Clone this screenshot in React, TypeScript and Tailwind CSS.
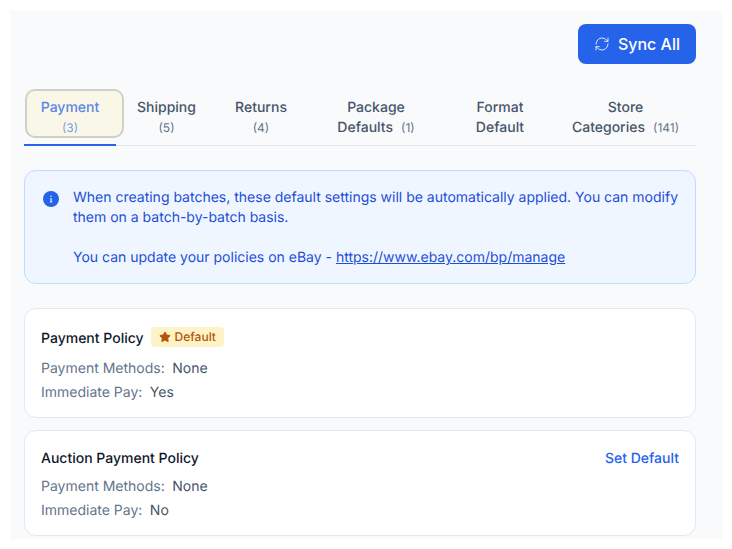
import React from 'react';
import { RefreshCw, Star } from 'lucide-react';

const tabs = [
  { key: 'shipping', width: 'w-[101px]', lines: ['Shipping'], count: '(5)' },
  { key: 'returns', width: 'w-[88px]', lines: ['Returns'], count: '(4)' },
  { key: 'package', width: 'w-[142px]', lines: ['Package', 'Defaults'], count: '(1)' },
  { key: 'format', width: 'w-[106px]', lines: ['Format', 'Default'], count: '' },
  { key: 'store', width: 'w-[145px]', lines: ['Store', 'Categories'], count: '(141)' },
];

const PolicyRow = ({ label, value }: { label: string; value: string }) => (
  <div className="text-sm leading-6">
    <span className="text-[#64748b]">{label}:</span>
    <span className="ml-[7.5px] text-[#475569]">{value}</span>
  </div>
);

const App = () => {
  return (
    <div className="h-[549px] overflow-hidden bg-white p-[10px] font-['Inter',sans-serif] antialiased [text-rendering:geometricPrecision]">
      <div className="h-[529px] overflow-hidden bg-[#f8fafc] pl-[14px] pr-[26px] pt-[14px]">
        {/* Header */}
        <div className="flex justify-end">
          <button className="flex h-10 w-[118px] items-center justify-center gap-2 rounded-lg bg-[#2563eb] text-base font-medium text-white">
            <RefreshCw className="h-4 w-4" strokeWidth={1.25} />
            Sync All
          </button>
        </div>

        {/* Tabs */}
        <div className="relative mt-6 flex h-[58px] border-b border-[#e2e8f0]">
          <div className="absolute left-[1px] top-[1px] h-[49px] w-[99px] rounded-[10px] border-[2px] border-[#d0d0c6] bg-[#f9f8e8]" />
          <div className="relative z-10 flex h-[58px] w-[92px] shrink-0 flex-col items-center border-b-2 border-[#2563eb] pt-[10px] text-sm leading-5 font-medium text-[#5c85e6]">
            <span>Payment</span>
            <span className="mt-[2px] text-xs font-normal text-[#7f9ce6]">(3)</span>
          </div>
          {tabs.map((tab) => (
            <div key={tab.key} className={`${tab.width} flex shrink-0 flex-col items-center pt-[10px] text-sm leading-5 font-medium text-[#475569]`}>
              <span>{tab.lines[0]}</span>
              {tab.lines[1] ? (
                <span>
                  {tab.lines[1]}
                  {tab.count && <span className="ml-2 text-xs font-normal text-[#64748b]">{tab.count}</span>}
                </span>
              ) : (
                <span className="mt-[2px] text-xs font-normal text-[#64748b]">{tab.count}</span>
              )}
            </div>
          ))}
        </div>

        {/* Notice */}
        <div className="mt-6 flex h-[114px] gap-[14px] rounded-xl border border-[#bfdbfe] bg-[#eff6ff] pl-[18px] pr-4 pt-[17px]">
          <svg className="mt-[3px] h-4 w-4 shrink-0" viewBox="0 0 16 16">
            <circle cx="8" cy="8" r="8" fill="#2563eb" />
            <rect x="7.3" y="4.6" width="1.4" height="1.4" rx="0.7" fill="#eff6ff" />
            <path d="M7.1 7.2h1.6v3.4h.5v.9H6.9v-.9h.6V8.1h-.4z" fill="#eff6ff" />
          </svg>
          <div className="text-sm leading-5 text-[#1d4ed8]">
            <p>When creating batches, these default settings will be automatically applied. You can modify them on a batch-by-batch basis.</p>
            <p className="mt-5">
              You can update your policies on eBay - <span className="underline">https://www.ebay.com/bp/manage</span>
            </p>
          </div>
        </div>

        {/* Policies */}
        <div className="mt-6 h-[110px] rounded-xl border border-[#e2e8f0] bg-white px-4 pt-[18px]">
          <div className="flex items-start gap-[7px]">
            <span className="mt-[2px] text-sm leading-5 font-medium text-[#0f172a]">Payment Policy</span>
            <span className="flex h-5 items-center gap-1 rounded bg-[#fef3c7] px-2 text-xs font-medium text-[#b45309]">
              <Star className="h-3 w-3 fill-[#b45309]" />
              Default
            </span>
          </div>
          <div className="mt-[8px]">
            <PolicyRow label="Payment Methods" value="None" />
            <PolicyRow label="Immediate Pay" value="Yes" />
          </div>
        </div>

        <div className="mt-3 h-[106px] rounded-xl border border-[#e2e8f0] bg-white px-4 pt-[18px]">
          <div className="flex items-center justify-between">
            <span className="text-sm leading-5 font-medium text-[#0f172a]">Auction Payment Policy</span>
            <span className="text-sm leading-5 font-medium text-[#2563eb]">Set Default</span>
          </div>
          <div className="mt-[6px]">
            <PolicyRow label="Payment Methods" value="None" />
            <PolicyRow label="Immediate Pay" value="No" />
          </div>
        </div>
      </div>
    </div>
  );
};

export default App;
